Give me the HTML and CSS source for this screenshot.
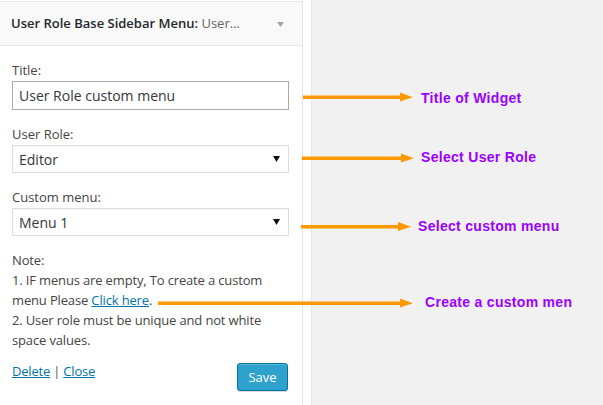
FILE: index.html
```html
<!DOCTYPE html>
<html>
<head>
<meta charset="utf-8">
<link rel="stylesheet" href="styles.css">
</head>
<body>
<div class="page">
  <div class="panel">
    <div class="head">
      <span class="head-title"><b>User Role Base Sidebar Menu:</b> <span class="in-title">User…</span></span>
      <svg class="head-arrow" width="7" height="5" viewBox="0 0 7 5"><polygon points="0,0 7,0 3.5,5" fill="#a0a5aa"/></svg>
    </div>
    <div class="body">
      <div class="field">
        <label class="lbl">Title:</label>
        <div class="input">User Role custom menu</div>
      </div>
      <div class="field">
        <label class="lbl">User Role:</label>
        <div class="select"><span>Editor</span><svg width="7" height="6" viewBox="0 0 7 6"><polygon points="0,0 7,0 3.5,6" fill="#111"/></svg></div>
      </div>
      <div class="field">
        <label class="lbl">Custom menu:</label>
        <div class="select"><span>Menu 1</span><svg width="7" height="6" viewBox="0 0 7 6"><polygon points="0,0 7,0 3.5,6" fill="#111"/></svg></div>
      </div>
      <p class="note">Note:<br>1. IF menus are empty, To create a custom<br>menu Please <a href="#">Click here</a>.<br>2. User role must be unique and not white<br>space values.</p>
      <div class="foot">
        <div class="links"><a href="#">Delete</a> | <a href="#">Close</a></div>
        <button class="save">Save</button>
      </div>
    </div>
  </div>
  <div class="gap"></div>
  <div class="canvas"></div>

  <svg class="arrows" width="603" height="405" viewBox="0 0 603 405">
    <g fill="#ff9900">
      <rect x="303" y="95.5" width="100" height="3.5"/>
      <polygon points="400,92.5 413,97.2 400,101.5"/>
      <rect x="302" y="156.5" width="102" height="3.5"/>
      <polygon points="401,153.5 414,158.2 401,162.5"/>
      <rect x="301" y="225" width="100" height="3.5"/>
      <polygon points="398,222 411,226.7 398,231"/>
      <rect x="158" y="301.5" width="245" height="3.5"/>
      <polygon points="400,298.5 413,303.2 400,307.5"/>
    </g>
  </svg>
  <span class="note-lbl n1">Title of Widget</span>
  <span class="note-lbl n2">Select User Role</span>
  <span class="note-lbl n3">Select custom menu</span>
  <span class="note-lbl n4">Create a custom men</span>
</div>
</body>
</html>
```
FILE: styles.css
```css
html, body {
  margin: 0;
  padding: 0;
  background: #fff;
}
.page {
  position: relative;
  width: 603px;
  height: 405px;
  display: flex;
  overflow: hidden;
  font-family: "Open Sans", "Liberation Sans", sans-serif;
  font-size: 13px;
  color: #444;
}
.panel {
  width: 302px;
  margin-top: 1px;
  border-top: 1px solid #e5e5e5;
  border-right: 1px solid #e5e5e5;
  background: #fff;
  display: flex;
  flex-direction: column;
}
.head {
  height: 43px;
  background: #f9f9f9;
  border-bottom: 1px solid #e5e5e5;
  display: flex;
  align-items: center;
  justify-content: space-between;
  padding: 0 18px 0 11px;
}
.head-title {
  color: #23282d;
  white-space: nowrap;
  padding-bottom: 1px;
}
.head-title b {
  font-weight: 600;
}
.in-title {
  color: #666;
  font-weight: 400;
}
.head-arrow {
  display: block;
  margin-top: 1px;
}
.body {
  padding: 14px 0 0 12px;
  display: flex;
  flex-direction: column;
}
.field {
  display: flex;
  flex-direction: column;
  margin-bottom: 14px;
}
.lbl {
  line-height: 20px;
  margin-bottom: 1px;
  color: #444;
}
.input {
  height: 27px;
  border: 1px solid #aaa;
  font-size: 14px;
  line-height: 27px;
  padding: 0 0 0 6px;
  width: 269px;
  color: #32373c;
}
.select {
  height: 26px;
  border: 1px solid #ddd;
  display: flex;
  align-items: center;
  justify-content: space-between;
  padding: 0 8px 0 6px;
  width: 261px;
  font-size: 14px;
  color: #32373c;
  box-shadow: inset 0 1px 2px rgba(0,0,0,0.04);
}
.select svg {
  display: block;
}
.note {
  margin: 0;
  line-height: 20px;
  color: #444;
  letter-spacing: -0.15px;
}
.note a, .links a {
  color: #0073aa;
  text-decoration: underline;
}
.foot {
  display: flex;
  justify-content: space-between;
  align-items: flex-start;
  margin-top: 11px;
  width: 276px;
}
.links {
  line-height: 20px;
  color: #555;
  letter-spacing: -0.2px;
}
.save {
  margin-top: 2px;
  width: 51px;
  height: 28px;
  background: #2ea2cc;
  border: 1px solid #0074a2;
  border-radius: 3px;
  color: #fff;
  font-family: "Open Sans", "Liberation Sans", sans-serif;
  font-size: 13px;
  padding: 0 0 1px;
  box-shadow: inset 0 1px 0 rgba(120,200,230,0.5), 0 1px 0 rgba(0,0,0,0.15);
}
.gap {
  width: 8px;
}
.canvas {
  flex: 1;
  background: #f1f1f1;
  border-left: 1px solid #e6e6e6;
}
.arrows {
  position: absolute;
  left: 0;
  top: 0;
}
.note-lbl {
  position: absolute;
  font-family: "Liberation Sans", Arial, sans-serif;
  font-weight: 700;
  font-size: 14px;
  line-height: 16px;
  letter-spacing: 0.3px;
  color: #9b00ff;
  white-space: nowrap;
}
.n1 { left: 421px; top: 90px; }
.n2 { left: 421px; top: 149px; }
.n3 { left: 418px; top: 218px; }
.n4 { left: 425px; top: 294px; }
```
